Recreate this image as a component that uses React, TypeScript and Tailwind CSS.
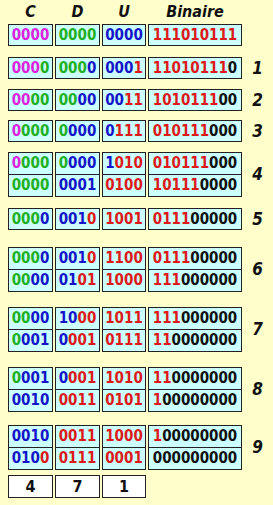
const COLORS: Record<string, string> = {
  m: "text-[#dd22dd]",
  g: "text-[#22b022]",
  b: "text-[#1414c8]",
  r: "text-[#dc1a1a]",
  k: "text-[#111111]",
};

type Cell = [string, string]; // digits, colour codes
type Line = [Cell, Cell, Cell, Cell];

type Group = {
  label?: string;
  mt: string;
  lines: Line[];
};

const GROUPS: Group[] = [
  {
    mt: "mt-0",
    lines: [[["0000", "mmmm"], ["0000", "gggg"], ["0000", "bbbb"], ["111010111", "rrrrrrrrr"]]],
  },
  {
    label: "1",
    mt: "mt-[11px]",
    lines: [[["0000", "mmmg"], ["0000", "gggb"], ["0001", "bbbr"], ["110101110", "rrrrrrrrk"]]],
  },
  {
    label: "2",
    mt: "mt-[10px]",
    lines: [[["0000", "mmgg"], ["0000", "ggbb"], ["0011", "bbrr"], ["101011100", "rrrrrrrkk"]]],
  },
  {
    label: "3",
    mt: "mt-[9px]",
    lines: [[["0000", "mggg"], ["0000", "gbbb"], ["0111", "brrr"], ["010111000", "rrrrrrkkk"]]],
  },
  {
    label: "4",
    mt: "mt-[10px]",
    lines: [
      [["0000", "mggg"], ["0000", "gbbb"], ["1010", "brrr"], ["010111000", "rrrrrrkkk"]],
      [["0000", "gggg"], ["0001", "bbbb"], ["0100", "rrrr"], ["101110000", "rrrrrkkkk"]],
    ],
  },
  {
    label: "5",
    mt: "mt-[11px]",
    lines: [[["0000", "gggb"], ["0010", "bbbr"], ["1001", "rrrr"], ["011100000", "rrrrkkkkk"]]],
  },
  {
    label: "6",
    mt: "mt-[17px]",
    lines: [
      [["0000", "gggb"], ["0010", "bbbr"], ["1100", "rrrr"], ["011100000", "rrrrkkkkk"]],
      [["0000", "ggbb"], ["0101", "bbrr"], ["1000", "rrrr"], ["111000000", "rrrkkkkkk"]],
    ],
  },
  {
    label: "7",
    mt: "mt-[15px]",
    lines: [
      [["0000", "ggbb"], ["1000", "bbrr"], ["1011", "rrrr"], ["111000000", "rrrkkkkkk"]],
      [["0001", "gbbb"], ["0001", "brrr"], ["0111", "rrrr"], ["110000000", "rrkkkkkkk"]],
    ],
  },
  {
    label: "8",
    mt: "mt-[15px]",
    lines: [
      [["0001", "gbbb"], ["0001", "brrr"], ["1010", "rrrr"], ["110000000", "rrkkkkkkk"]],
      [["0010", "bbbb"], ["0011", "rrrr"], ["0101", "rrrr"], ["100000000", "rkkkkkkkk"]],
    ],
  },
  {
    label: "9",
    mt: "mt-[13px]",
    lines: [
      [["0010", "bbbb"], ["0011", "rrrr"], ["1000", "rrrr"], ["100000000", "rkkkkkkkk"]],
      [["0100", "bbbr"], ["0111", "rrrr"], ["0001", "rrrr"], ["000000000", "kkkkkkkkk"]],
    ],
  },
];

const WIDTHS = ["w-[45px]", "w-[45px]", "w-[44px]", "w-[94px]"];

function Digits({ cell }: { cell: Cell }) {
  const [digits, codes] = cell;
  return (
    <>
      {digits.split("").map((d, i) => (
        <span key={i} className={COLORS[codes[i]]}>
          {d}
        </span>
      ))}
    </>
  );
}

export default function App() {
  return (
    <div
      className="w-[273px] h-[505px] bg-[#ffffcc] overflow-hidden pl-[8px]"
      style={{ fontFamily: '"DejaVu Sans Condensed", "DejaVu Sans", sans-serif' }}
    >
      {/* Headers */}
      <div className="flex gap-[2px] h-[24px] items-center text-[16px] leading-none font-bold italic text-[#111]">
        <div className={`${WIDTHS[0]} text-center`}>C</div>
        <div className={`${WIDTHS[1]} text-center`}>D</div>
        <div className={`${WIDTHS[2]} text-center`}>U</div>
        <div className={`${WIDTHS[3]} text-center`}>Binaire</div>
      </div>

      {GROUPS.map((g, gi) => (
        <div key={gi} className={`flex items-center ${g.mt}`}>
          <div className="flex gap-[2px]">
            {[0, 1, 2, 3].map((col) => (
              <div key={col} className={`${WIDTHS[col]} flex flex-col`}>
                {g.lines.map((line, li) => (
                  <div
                    key={li}
                    className={`${
                      g.lines.length > 1 ? "h-[23px]" : "h-[22px]"
                    } ${li > 0 ? "-mt-px" : ""} border border-[#222] bg-[#ccffff] flex items-center justify-center text-[15px] font-bold leading-none`}
                  >
                    <Digits cell={line[col]} />
                  </div>
                ))}
              </div>
            ))}
          </div>
          <div className="flex-1 text-center text-[17px] leading-none font-bold italic text-[#111]">
            {g.label}
          </div>
        </div>
      ))}

      {/* Result row */}
      <div className="flex gap-[2px] mt-[5px]">
        {["4", "7", "1"].map((n, i) => (
          <div
            key={i}
            className={`${WIDTHS[i]} h-[23px] border border-[#222] bg-white flex items-center justify-center text-[16px] leading-none font-bold text-[#111]`}
          >
            {n}
          </div>
        ))}
      </div>
    </div>
  );
}
